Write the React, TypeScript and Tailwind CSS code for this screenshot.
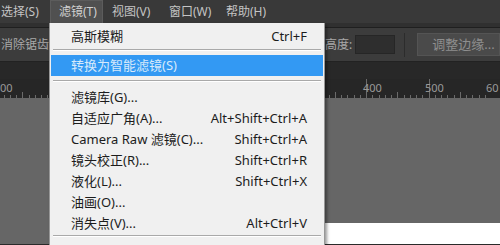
import React from 'react';

const menuBar = [
  { label: '选择(S)', w: 'w-[50px]', pl: 'pl-[1px]' },
  { label: '滤镜(T)', w: 'w-[53px]', pl: 'pl-[8px]', active: true },
  { label: '视图(V)', w: 'w-[57px]', pl: 'pl-[9px]' },
  { label: '窗口(W)', w: 'w-[58px]', pl: 'pl-[9px]' },
  { label: '帮助(H)', w: 'w-[60px]', pl: 'pl-[8px]' },
];

const items = [
  { label: '滤镜库(G)...', shortcut: '' },
  { label: '自适应广角(A)...', shortcut: 'Alt+Shift+Ctrl+A' },
  { label: 'Camera Raw 滤镜(C)...', shortcut: 'Shift+Ctrl+A' },
  { label: '镜头校正(R)...', shortcut: 'Shift+Ctrl+R' },
  { label: '液化(L)...', shortcut: 'Shift+Ctrl+X' },
  { label: '油画(O)...', shortcut: '' },
  { label: '消失点(V)...', shortcut: 'Alt+Ctrl+V' },
];

function Separator({ className }: { className: string }) {
  return (
    <div className={className}>
      <div className="mx-[3px] border-t border-[#a9a9a9]" />
      <div className="mx-[3px] border-t border-white" />
    </div>
  );
}

function Ruler() {
  const ticks = Array.from({ length: 80 }, (_, i) => i);
  return (
    <div className="relative h-[19px] bg-[#262626]">
      {ticks.map((i) => {
        const x = -9 + i * 6.25;
        const major = i % 10 === 0;
        return (
          <div
            key={i}
            className="absolute bottom-0 w-px bg-[#6a6a6a]"
            style={{ left: x, height: major ? 19 : i % 5 === 0 ? 6 : 3 }}
          />
        );
      })}
      <span className="absolute left-[0px] top-[1px] text-[11px] text-[#9a9a9a]">00</span>
      <span className="absolute left-[363px] top-[1px] text-[11px] text-[#9a9a9a]">400</span>
      <span className="absolute left-[425px] top-[1px] text-[11px] text-[#9a9a9a]">500</span>
      <span className="absolute left-[486px] top-[1px] text-[11px] text-[#9a9a9a]">60</span>
    </div>
  );
}

export default function App() {
  return (
    <div
      className="relative w-[500px] h-[245px] overflow-hidden bg-[#2a2a2a]"
      style={{ fontFamily: '"Noto Sans", "Noto Sans CJK SC", sans-serif' }}
    >
      {/* menu bar */}
      <div className="flex h-[23px] bg-[#393939] text-[12px] text-[#c4c4c4]">
        {menuBar.map((m) => (
          <div
            key={m.label}
            className={`flex items-center ${m.w} ${m.pl} ${
              m.active ? 'bg-[#505050] border border-[#5c5c5c] border-b-0 text-[#d0d0d0]' : ''
            }`}
          >
            {m.label}
          </div>
        ))}
      </div>
      <div className="h-[5px] bg-[#303030] border-b border-[#1f1f1f]" />

      {/* options bar */}
      <div className="flex h-[34px] items-center bg-[#3c3c3c] border-b border-[#222] text-[12px] text-[#a8a8a8]">
        <span className="pl-[1px] w-[325px]">消除锯齿</span>
        <span>高度:</span>
        <div className="ml-[3px] h-[19px] w-[40px] bg-[#2e2e2e] border border-[#262626]" />
        <div className="ml-[9px] h-[24px] w-px bg-[#2c2c2c]" />
        <div className="ml-[12px] flex h-[23px] flex-1 items-center bg-[#4a4a4a] border border-[#545454] pl-[14px] text-[13px] text-[#8e8e8e]">
          调整边缘...
        </div>
      </div>

      {/* document tabs + ruler */}
      <div className="h-[17px] bg-[#282828]" />
      <Ruler />

      {/* canvas */}
      <div className="h-[125px] bg-[#666666]" />
      <div className="flex h-[21px]">
        <div className="w-[325px] bg-[#666666]" />
        <div className="flex-1 bg-white" />
      </div>

      {/* dropdown menu */}
      <div className="absolute left-[49px] top-[23px] w-[276px] h-[230px] bg-[#f0f0f0] border border-[#979797] border-t-0 pt-[3px] text-[13px] text-[#1c1c1c] shadow-[2px_2px_3px_rgba(0,0,0,0.4)]">
        <div className="flex h-[21px] items-center justify-between pl-[21px] pr-[17px]">
          <span>高斯模糊</span>
          <span>Ctrl+F</span>
        </div>
        <Separator className="pt-[2px] h-[8px]" />
        <div className="mx-[1px] flex h-[21px] items-center bg-[#3399f3] pl-[20px] text-[#d6e9fb]">
          转换为智能滤镜(S)
        </div>
        <Separator className="pt-[4px] h-[11px]" />
        {items.map((it) => (
          <div key={it.label} className="flex h-[21px] items-center justify-between pl-[21px] pr-[17px]">
            <span>{it.label}</span>
            <span>{it.shortcut}</span>
          </div>
        ))}
        <Separator className="pt-[1px]" />
      </div>
    </div>
  );
}
